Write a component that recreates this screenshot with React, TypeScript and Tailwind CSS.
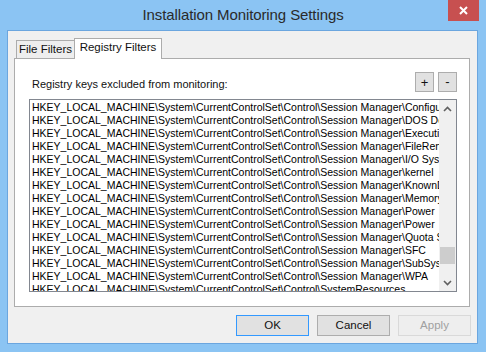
import React from "react";

const base = "HKEY_LOCAL_MACHINE\\System\\CurrentControlSet\\Control\\";
const rows = [
  "Session Manager\\Configuration Manager",
  "Session Manager\\DOS Devices",
  "Session Manager\\Executive",
  "Session Manager\\FileRenameOperations",
  "Session Manager\\I/O System",
  "Session Manager\\kernel",
  "Session Manager\\KnownDLLs",
  "Session Manager\\Memory Management",
  "Session Manager\\Power",
  "Session Manager\\Power",
  "Session Manager\\Quota System",
  "Session Manager\\SFC",
  "Session Manager\\SubSystems",
  "Session Manager\\WPA",
  "SystemResources",
];

export default function App() {
  return (
    <div className="w-[486px] h-[352px] bg-[#8bc4f3] flex flex-col pl-[7px] pr-[8px] pb-[8px] font-['Liberation_Sans',Arial,sans-serif] text-[#111]">
      {/* Title bar */}
      <div className="h-[30px] -ml-[7px] -mr-[8px] grid grid-cols-[1fr_auto_1fr]">
        <div />
        <div className="text-[15px] leading-[30px] text-[#2a2a2a] tracking-[-0.1px]">
          Installation Monitoring Settings
        </div>
        <div className="flex justify-end items-start pr-[7px]">
          <div className="w-[31px] h-[21px] bg-[#c75050] flex items-center justify-center">
            <svg width="9" height="9" viewBox="0 0 9 9">
              <path d="M1 1 L8 8 M8 1 L1 8" stroke="#ffffff" strokeWidth="2" />
            </svg>
          </div>
        </div>
      </div>

      {/* Content */}
      <div className="flex-1 border border-[#6ba6df] bg-[#f0f0f0] flex flex-col pt-[7px] pl-[6px] pr-[6px] pb-[7px]">
        {/* Tabs */}
        <div className="h-[20px] flex items-end pl-[2px]">
          <div className="h-[18px] w-[59px] border-l border-t border-r border-[#acacac] bg-[#eeeeee] flex items-center justify-center text-[11.5px] leading-none pt-[1px]">
            File Filters
          </div>
          <div className="relative z-10 -ml-px -mb-px h-[21px] w-[88px] border-l border-t border-r border-[#acacac] bg-white flex items-center justify-center text-[11.5px] leading-none pb-[3px]">
            Registry Filters
          </div>
        </div>

        {/* Panel */}
        <div className="h-[249px] mr-[1px] border border-[#acacac] bg-white flex flex-col pt-[13px] pr-[12px] pb-[14px]">
          <div className="flex items-end justify-between pl-[17px]">
            <div className="text-[11px] leading-[14px] pb-[1px]">Registry keys excluded from monitoring:</div>
            <div className="flex gap-[4px]">
              <div className="w-[19px] h-[20px] border border-[#adadad] bg-[#e1e1e1] flex items-center justify-center text-[13px] leading-none">
                +
              </div>
              <div className="w-[19px] h-[20px] border border-[#adadad] bg-[#e1e1e1] flex items-center justify-center text-[13px] leading-none pb-[2px]">
                -
              </div>
            </div>
          </div>

          <div className="mt-[7px] ml-[14px] h-[193px] border border-[#828790] bg-white flex overflow-hidden">
            <div className="flex-1 overflow-hidden pt-[1px] pl-[2px]">
              {rows.map((r, i) => (
                <div key={i} className="h-[13px] text-[10.5px] leading-[13px] whitespace-nowrap text-black">
                  {base + r}
                </div>
              ))}
            </div>
            <div className="w-[17px] bg-[#f0f0f0] flex flex-col">
              <div className="h-[17px] flex items-center justify-center">
                <svg width="9" height="6" viewBox="0 0 9 6">
                  <path d="M1 5 L4.5 1.5 L8 5" stroke="#606060" strokeWidth="1.6" fill="none" />
                </svg>
              </div>
              <div className="flex-1 flex flex-col justify-end pb-[10px]">
                <div className="h-[17px] mx-[1px] bg-[#cdcdcd]" />
              </div>
              <div className="h-[17px] flex items-center justify-center">
                <svg width="9" height="6" viewBox="0 0 9 6">
                  <path d="M1 1 L4.5 4.5 L8 1" stroke="#606060" strokeWidth="1.6" fill="none" />
                </svg>
              </div>
            </div>
          </div>
        </div>

        {/* Buttons */}
        <div className="mt-[8px] flex justify-end gap-[8px]">
          <div className="w-[73px] h-[21px] border border-[#3399ff] bg-[#e1e1e1] flex items-center justify-center text-[11.5px] leading-none">
            OK
          </div>
          <div className="w-[73px] h-[21px] border border-[#adadad] bg-[#e1e1e1] flex items-center justify-center text-[11.5px] leading-none">
            Cancel
          </div>
          <div className="w-[73px] h-[21px] border border-[#d9d9d9] bg-[#eeeeee] flex items-center justify-center text-[11.5px] leading-none text-[#a0a0a0]">
            Apply
          </div>
        </div>
      </div>
    </div>
  );
}
